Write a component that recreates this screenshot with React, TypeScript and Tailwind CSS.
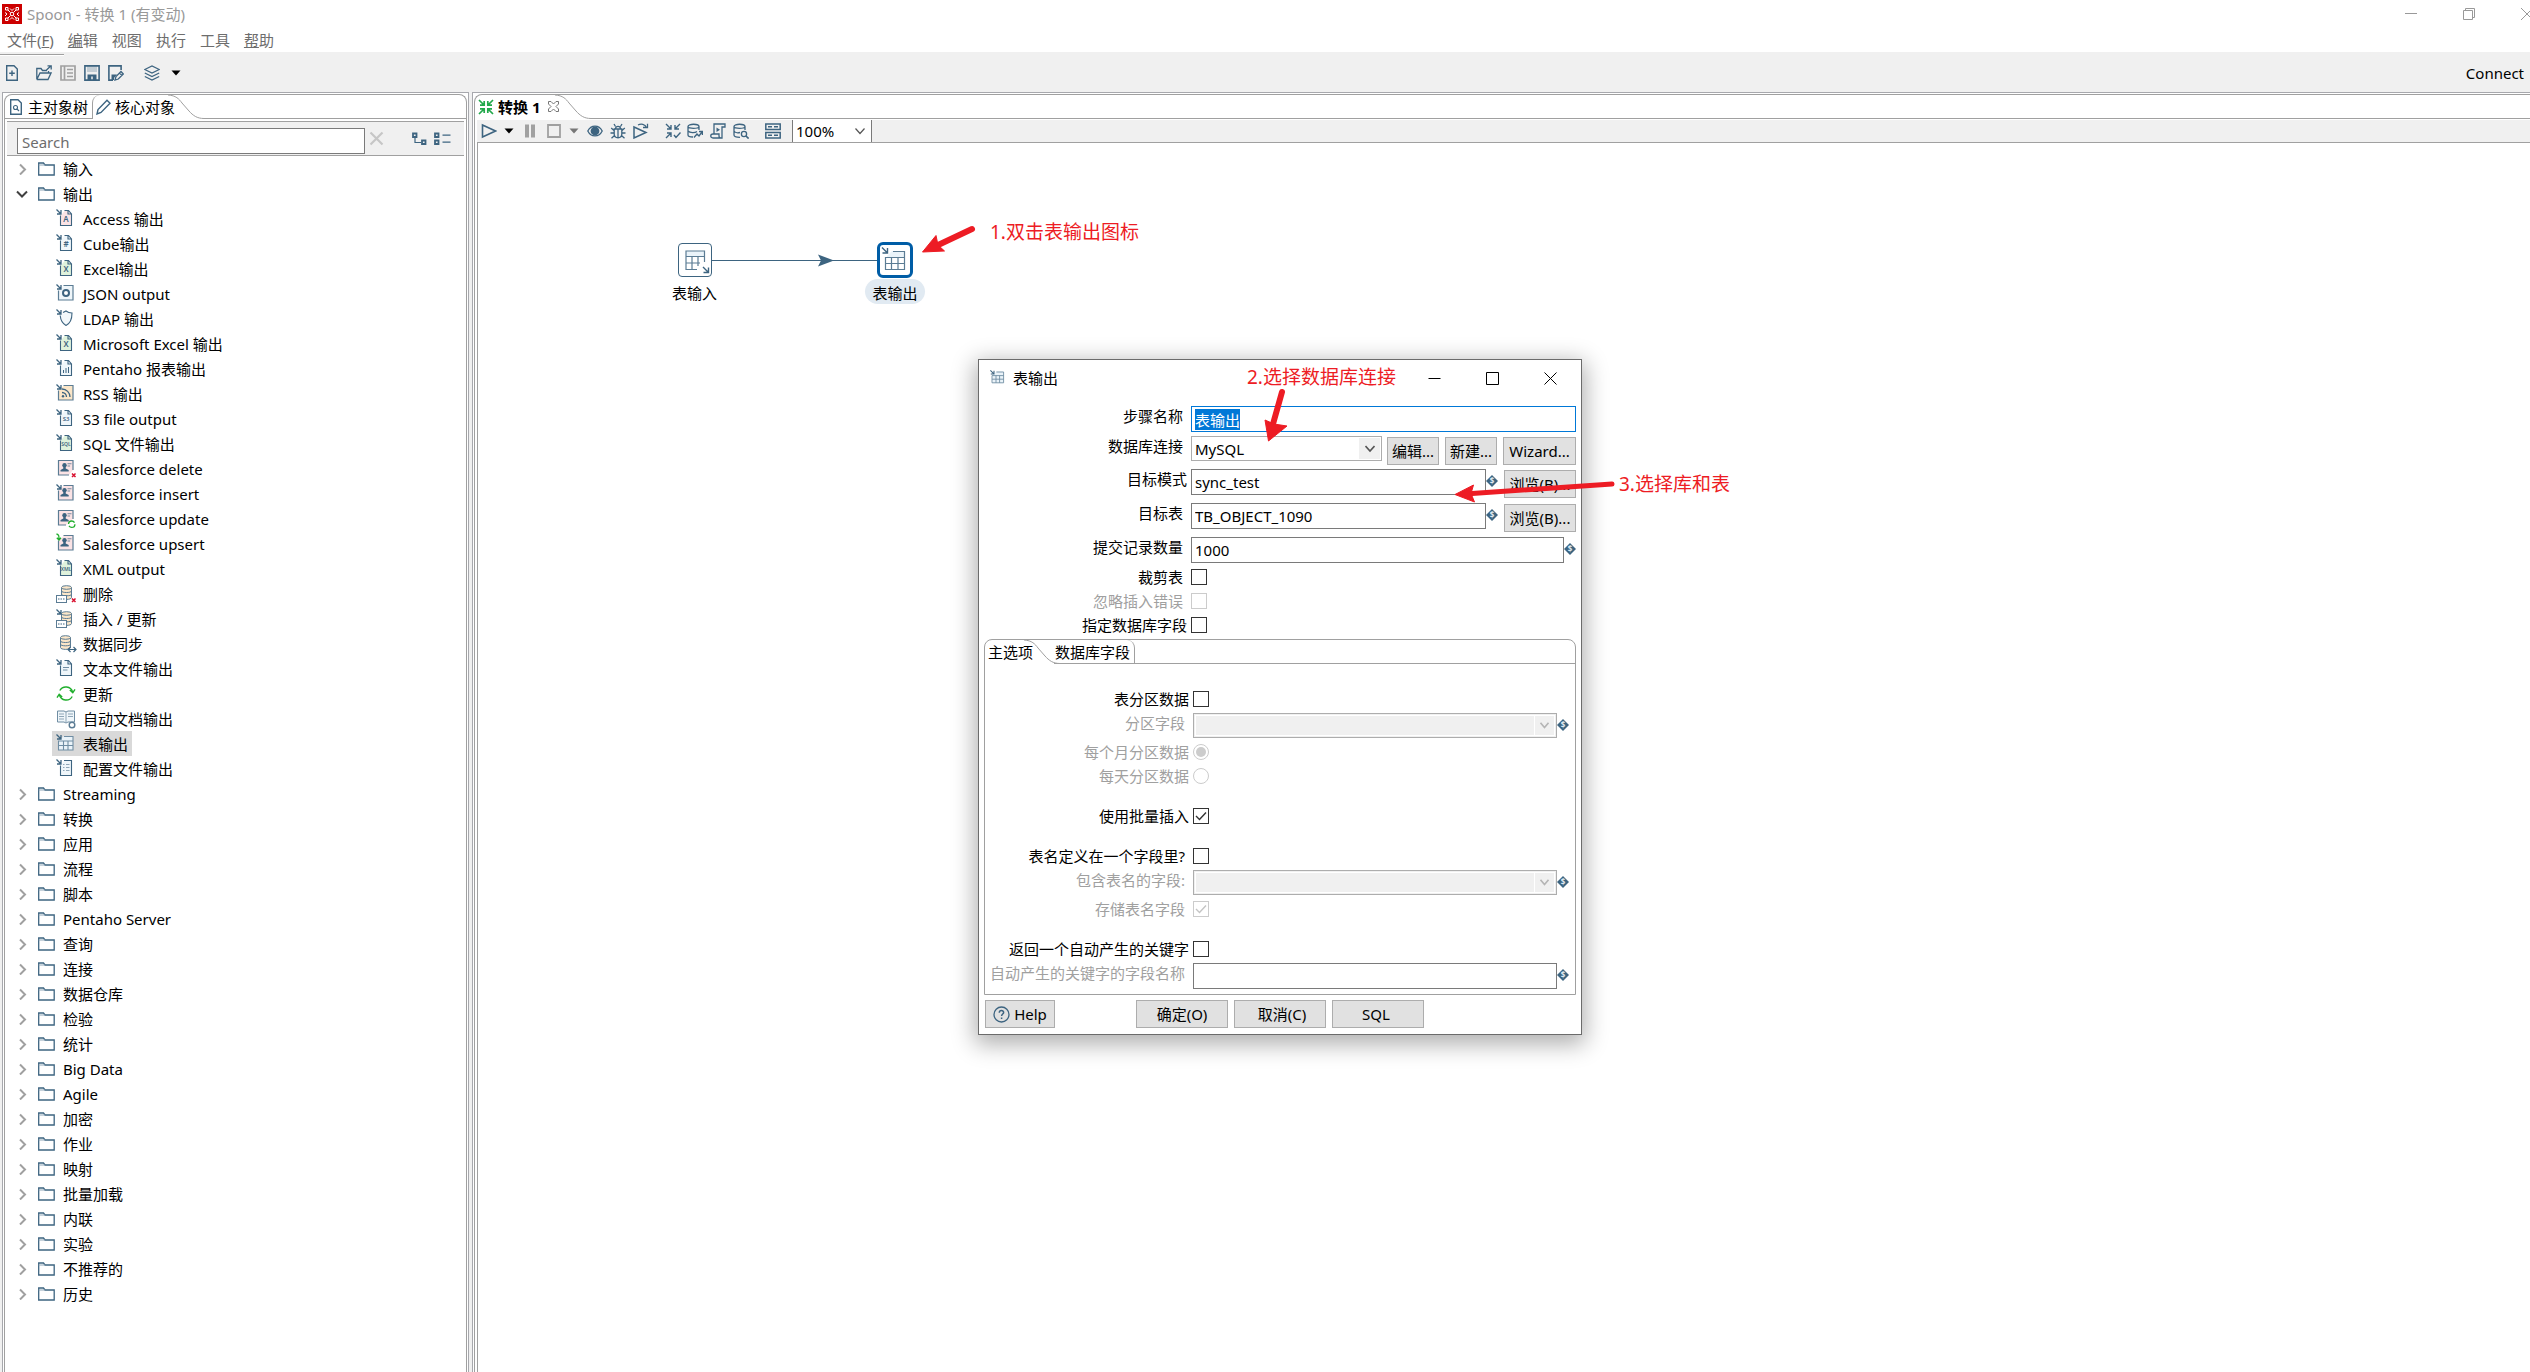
import React, { useEffect, useRef } from 'react';

const BLUE = '#3d6480';
const FONT = "font-['Noto_Sans','Noto_Sans_CJK_SC',sans-serif]";

/* ---------- step icons ---------- */

function InArrow({ color = BLUE }: { color?: string }) {
  return <path d="M0.5 0.5 L4.5 4.5 M5 1 V5 H1" fill="none" stroke={color} strokeWidth="1.3" />;
}

function FileIcon({ fill, label, size = 8, children }: { fill: string; label?: string; size?: number; children?: React.ReactNode }) {
  return (
    <g>
      <path d="M4.5 7 L8.5 2 H12.5 L15.5 5 V16.5 H4.5 Z" fill={fill} />
      <path d="M4.5 6.5 V16.5 H15.5 V5 L12.5 1.5 H8.5 M12 1.5 V5 H15.5" fill="none" stroke={BLUE} strokeWidth="1.1" />
      {label && (
        <text x="10" y={size > 6 ? 13 : 11.5} textAnchor="middle" fontSize={size} fontWeight="600" fill={BLUE} fontFamily="Noto Sans, sans-serif">
          {label}
        </text>
      )}
      {children}
      <InArrow />
    </g>
  );
}

function BoxFrame({ fill }: { fill: string }) {
  return (
    <g>
      <path d="M2.5 7 L8 1.5 H17 V16 H2.5 Z" fill={fill} />
      <path d="M2.5 6.5 V16 H17 V1.5 H7.5" fill="none" stroke="#5b7c94" strokeWidth="1.2" />
    </g>
  );
}

function Person() {
  return (
    <g fill={BLUE}>
      <circle cx="8.5" cy="6.3" r="2.2" />
      <path d="M7.3 8 h2.4 v1.6 l3 1.4 v1.6 H4.5 V11 l2.8 -1.4 Z" />
      <path d="M11.5 4.2 h4 v1 h-4 Z M11.5 6.4 h2.6 v1 h-2.6 Z" opacity="0.7" />
    </g>
  );
}

function Cylinder({ x = 5, y = 1 }: { x?: number; y?: number }) {
  return (
    <g transform={`translate(${x} ${y})`} fill="#fbe6c8" stroke="#5b7c94" strokeWidth="1">
      <path d="M0.5 2.5 V12.5 C0.5 15 10.5 15 10.5 12.5 V2.5" />
      <ellipse cx="5.5" cy="2.5" rx="5" ry="1.8" />
      <path d="M0.5 6 C0.5 8 10.5 8 10.5 6 M0.5 9.3 C0.5 11.3 10.5 11.3 10.5 9.3" fill="none" />
    </g>
  );
}

function Slip() {
  return (
    <g>
      <rect x="0.5" y="11.5" width="10" height="7" fill="#fff" stroke="#5b7c94" />
      <path d="M2 15 H9.5" stroke={BLUE} strokeDasharray="1.5 1" />
    </g>
  );
}

function RedX() {
  return <path d="M16 14.5 L19.5 18 M19.5 14.5 L16 18" stroke="#d9102f" strokeWidth="1.5" />;
}

function TableOut() {
  return (
    <g>
      <path d="M3 6.5 L8 2 H17 V16 H3 Z" fill="#eaf3f9" />
      <path d="M8 2.5 H17 V16 H2.5 V7 H17 M7.5 7 V16 M12 7 V16 M2.5 11.5 H17" fill="none" stroke="#6f8da3" strokeWidth="1.1" />
      <InArrow />
    </g>
  );
}

const stepArt: Record<string, React.ReactNode> = {
  access: <FileIcon fill="#fbe3e5" label="A" />,
  cube: <FileIcon fill="#eff6fa" label="#" />,
  excel: <FileIcon fill="#dff2dc" label="X" />,
  json: (
    <g>
      <BoxFrame fill="#eff6fa" />
      <circle cx="10" cy="9" r="3" fill="#fff" stroke={BLUE} strokeWidth="2" />
      <InArrow />
    </g>
  ),
  ldap: (
    <g>
      <path d="M4 6 L10 2 L16 4 C16 10 14 14 10 16.5 C6 14 4.5 10 4 6 Z" fill="#f3f8fb" />
      <path d="M4.2 6.5 C4.6 11 6.5 14.5 10 16.5 C14 14.5 16 10 16 4 C13.5 4 11.5 3.2 10 2 L7 3.6" fill="none" stroke={BLUE} strokeWidth="1.1" />
      <InArrow />
    </g>
  ),
  report: (
    <FileIcon fill="#eff6fa">
      <path d="M7.5 14 V11 M10 14 V9 M12.5 14 V8" stroke={BLUE} strokeWidth="1" />
    </FileIcon>
  ),
  rss: (
    <g>
      <BoxFrame fill="#fbe6c8" />
      <path d="M6 5 A8 8 0 0 1 14 13 M6 8.5 A4.5 4.5 0 0 1 10.5 13" fill="none" stroke={BLUE} strokeWidth="1.3" />
      <circle cx="7" cy="12.2" r="1.2" fill={BLUE} />
      <InArrow />
    </g>
  ),
  s3: <FileIcon fill="#eff6fa" label="S3" size={6} />,
  sql: <FileIcon fill="#dff2dc" label="SQL" size={5} />,
  sfdelete: (
    <g>
      <path d="M13 16 H2.5 V1.5 H17 V11" fill="#fbe3e5" stroke="#5b7c94" strokeWidth="1.2" />
      <Person />
      <RedX />
    </g>
  ),
  sfinsert: (
    <g>
      <BoxFrame fill="#fbe3e5" />
      <Person />
      <InArrow />
    </g>
  ),
  sfupdate: (
    <g>
      <path d="M10 16 H2.5 V1.5 H17 V10" fill="#fbe3e5" stroke="#5b7c94" strokeWidth="1.2" />
      <Person />
      <circle cx="15.7" cy="15.2" r="3.2" fill="#fff" stroke="#1fae2c" strokeWidth="1.3" strokeDasharray="8 2" />
    </g>
  ),
  sfupsert: (
    <g>
      <BoxFrame fill="#fbe3e5" />
      <Person />
      <path d="M0.5 0 C3 0.5 3 2 3 5.5 M0.8 3.8 L3 6 L5 3.8" fill="none" stroke="#1fae2c" strokeWidth="1.3" />
    </g>
  ),
  xml: <FileIcon fill="#dff2dc" label="XML" size={5} />,
  delete: (
    <g>
      <Cylinder />
      <Slip />
      <RedX />
    </g>
  ),
  upsert: (
    <g>
      <Cylinder x={5} y={2} />
      <Slip />
      <InArrow />
    </g>
  ),
  sync: (
    <g>
      <Cylinder x={4} y={1} />
      <path d="M12 15.5 H20 M14.5 13 L12 15.5 L14.5 18 M17.5 13 L20 15.5 L17.5 18" fill="none" stroke={BLUE} strokeWidth="1.2" />
    </g>
  ),
  text: (
    <FileIcon fill="#eff6fa">
      <path d="M7 8.5 H13 M7 11 H11.5" stroke="#6f8da3" strokeWidth="1" />
    </FileIcon>
  ),
  update: (
    <g fill="none" stroke="#1fae2c" strokeWidth="1.4">
      <path d="M3.8 6.5 A7 7 0 0 1 16.6 8 M16.2 12.5 A7 7 0 0 1 3.4 11" />
      <path d="M13.8 6 L16.8 8.6 L19 5.4 M6.2 13 L3.2 10.4 L1 13.6" />
    </g>
  ),
  doc: (
    <g>
      <path d="M1.5 2 H8 L10 3 L12 2 H18.5 V13 H12 L10 14 L8 13 H1.5 Z" fill="#eff6fa" stroke="#6f8da3" />
      <path d="M10 3 V14 M3 5 H8 M3 7.5 H8 M3 10 H8 M12 5 H17 M12 7.5 H17" stroke="#8fa6b7" />
      <circle cx="16" cy="16" r="2.8" fill="#fff" stroke="#5b7c94" strokeWidth="1.4" />
    </g>
  ),
  table: <TableOut />,
  props: (
    <g>
      <path d="M5 7 L8 2 H15.5 V16.5 H5 Z" fill="#eff6fa" />
      <path d="M4.5 6.5 V16.5 H15.5 V1.5 H8" fill="none" stroke={BLUE} strokeWidth="1.1" />
      <path d="M7 5.5 H8.5 M10 5.5 H13.5 M7 8.5 H8.5 M10 8.5 H13.5 M7 11.5 H8.5 M10 11.5 H13.5" stroke="#8fa6b7" />
      <InArrow />
    </g>
  ),
};

function StepIcon({ name }: { name: string }) {
  return (
    <svg className="size-5 shrink-0 overflow-visible" viewBox="0 0 20 20" aria-hidden="true">
      {stepArt[name]}
    </svg>
  );
}

/* ---------- tree ---------- */

const outputSteps: [string, string][] = [
  ['access', 'Access 输出'],
  ['cube', 'Cube输出'],
  ['excel', 'Excel输出'],
  ['json', 'JSON output'],
  ['ldap', 'LDAP 输出'],
  ['excel', 'Microsoft Excel 输出'],
  ['report', 'Pentaho 报表输出'],
  ['rss', 'RSS 输出'],
  ['s3', 'S3 file output'],
  ['sql', 'SQL 文件输出'],
  ['sfdelete', 'Salesforce delete'],
  ['sfinsert', 'Salesforce insert'],
  ['sfupdate', 'Salesforce update'],
  ['sfupsert', 'Salesforce upsert'],
  ['xml', 'XML output'],
  ['delete', '删除'],
  ['upsert', '插入 / 更新'],
  ['sync', '数据同步'],
  ['text', '文本文件输出'],
  ['update', '更新'],
  ['doc', '自动文档输出'],
  ['table', '表输出'],
  ['props', '配置文件输出'],
];

const otherFolders = [
  'Streaming', '转换', '应用', '流程', '脚本', 'Pentaho Server', '查询', '连接', '数据仓库', '检验',
  '统计', 'Big Data', 'Agile', '加密', '作业', '映射', '批量加载', '内联', '实验', '不推荐的', '历史',
];

function Folder({ label, open, children }: { label: string; open?: boolean; children?: React.ReactNode }) {
  return (
    <li>
      <button type="button" aria-expanded={!!open} className="flex h-[25px] items-center pl-[11px]">
        <svg className="h-3 w-3" viewBox="0 0 12 12" fill="none" aria-hidden="true">
          {open ? (
            <path d="M1 3.5 L6 8.5 L11 3.5" stroke="#404040" strokeWidth="2" />
          ) : (
            <path d="M4 1.5 L9 6.5 L4 11.5" stroke="#a0a0a0" strokeWidth="2" />
          )}
        </svg>
        <svg className="ml-[10px] h-4 w-[17px]" viewBox="0 0 17 16" fill="none" aria-hidden="true">
          <path d="M0.7 2 H5.5 L7 4 H16.2 V14 H0.7 Z" stroke={BLUE} strokeWidth="1.3" />
          <path d="M0.7 4 H7" stroke="#8fa6b7" />
        </svg>
        <span className="ml-2">{label}</span>
      </button>
      {children}
    </li>
  );
}

function Tree() {
  return (
    <ul className="flex-1 overflow-hidden">
      <Folder label="输入" />
      <Folder label="输出" open>
        <ul>
          {outputSteps.map(([icon, label], i) => (
            <li key={i}>
              <button
                type="button"
                className={
                  label === '表输出'
                    ? 'ml-[47px] flex h-[25px] items-center gap-[7px] bg-[#d9d9d9] px-1'
                    : 'ml-[47px] flex h-[25px] items-center gap-[7px] px-1'
                }
              >
                <StepIcon name={icon} />
                <span>{label}</span>
              </button>
            </li>
          ))}
        </ul>
      </Folder>
      {otherFolders.map((f) => (
        <Folder key={f} label={f} />
      ))}
    </ul>
  );
}

/* ---------- shared bits ---------- */

function Icon({ label, w = 16, children, className = '' }: { label: string; w?: number; children: React.ReactNode; className?: string }) {
  return (
    <button type="button" aria-label={label} className={`shrink-0 ${className}`}>
      <svg width={w} height="16" viewBox={`0 0 ${w} 16`} fill="none" stroke={BLUE} strokeWidth="1.6" aria-hidden="true" className="block">
        {children}
      </svg>
    </button>
  );
}

function Caret({ label, color, className }: { label: string; color: string; className: string }) {
  return (
    <button type="button" aria-label={label} className={`shrink-0 ${className}`}>
      <svg width="10" height="6" viewBox="0 0 10 6" className="block" aria-hidden="true">
        <path d="M0.5 0.5 H9.5 L5 5.5 Z" fill={color} />
      </svg>
    </button>
  );
}

function TabCurve() {
  return (
    <svg className="h-6 w-9 shrink-0" viewBox="0 0 36 24" fill="none" aria-hidden="true">
      <path d="M0 0 C8 0.5 11 4 14 8 L21 16 C25 20.5 29 23.5 36 23.5" stroke="#a0a0a0" />
    </svg>
  );
}

/* ---------- window chrome ---------- */

function TitleBar() {
  return (
    <header className="bg-white">
      <div className="flex h-7 items-center pl-0.5 text-[#999999]">
        <svg className="size-5" viewBox="0 0 20 20" aria-hidden="true">
          <rect width="20" height="20" fill="#cc0000" />
          <g stroke="#fff" strokeWidth="1" fill="none">
            <path d="M3.5 3.5 H6 V6 H3.5 Z M14 3.5 H16.5 V6 H14 Z M3.5 14 H6 V16.5 H3.5 Z M14 14 H16.5 V16.5 H14 Z" />
            <path d="M6 6 L8.5 8.5 M14 6 L11.5 8.5 M6 14 L8.5 11.5 M14 14 L11.5 11.5" />
            <path d="M8 4.5 L10 6.5 L12 4.5 M3 8.5 L5 10 L3 12 M17 8.5 L15 10 L17 12 M8 15.5 L10 13.5 L12 15.5" />
            <circle cx="10" cy="10" r="1.8" />
          </g>
        </svg>
        <span className="ml-[5px] flex-1">Spoon - 转换 1 (有变动)</span>
        <div className="flex h-6 items-center gap-11 overflow-hidden">
          <button type="button" aria-label="最小化">
            <svg width="14" height="14" viewBox="0 0 14 14" className="block"><path d="M1 6.5 H13" stroke="#999" /></svg>
          </button>
          <button type="button" aria-label="还原">
            <svg width="14" height="14" viewBox="0 0 14 14" fill="none" stroke="#999" className="block">
              <path d="M1.5 3.5 H10.5 V12.5 H1.5 Z M3.5 3.5 V1.5 H12.5 V10.5 H10.5" />
            </svg>
          </button>
          <button type="button" aria-label="关闭">
            <svg width="10" height="14" viewBox="0 0 10 14" fill="none" stroke="#999" className="block">
              <path d="M1 1 L13 13 M13 1 L1 13" />
            </svg>
          </button>
        </div>
      </div>
      <nav className="flex h-6 items-center gap-[14px] pl-[7px] text-[#6d6d6d]">
        <button type="button">文件(<u>F</u>)</button>
        <button type="button"><u>编</u>辑</button>
        <button type="button">视图</button>
        <button type="button">执行</button>
        <button type="button">工具</button>
        <button type="button"><u>帮</u>助</button>
      </nav>
    </header>
  );
}

function MainToolbar() {
  return (
    <div className="shrink-0 pt-0.5">
      <div className="h-0.5 w-16 border-t border-[#a0a0a0] bg-white" />
      <div className="flex h-9 items-center pr-1.5 pb-0.5 pl-1">
        <Icon label="新建">
          <path d="M2.7 0.8 H10 L13.3 4 V15.2 H2.7 Z M8 5.5 V11 M5.2 8.2 H10.8" strokeWidth="1.4" />
        </Icon>
        <Icon label="打开" className="ml-4">
          <path d="M0.8 14.5 V3.5 H5 L6.5 5.5 H11 M0.8 14.5 H12 L15 8 H4 L0.8 14.5 M12.5 8 V6 M10.5 5 L15 0.8 M11.5 0.8 H15.2 V4.5" strokeWidth="1.3" />
        </Icon>
        <Icon label="资源库浏览" className="ml-2">
          <path d="M1 1 H15 V15 H1 Z M4.5 1 V15 M7 4.5 H13 M7 8 H13 M7 11.5 H13" stroke="#a0a0a0" strokeWidth="1.7" />
        </Icon>
        <Icon label="保存" className="ml-2">
          <path d="M0.9 0.9 H15.1 V15.1 H0.9 Z" />
          <path d="M3 1 H13 V7 H3 Z M4 10 H12 V15 H4 Z" fill={BLUE} stroke="none" opacity="0.25" />
          <path d="M3.5 9.5 H12.5 V15 H9 V11.5 H7 V15 H3.5 Z" fill={BLUE} stroke="none" />
        </Icon>
        <Icon label="另存为" className="ml-2">
          <path d="M5 15.1 H0.9 V0.9 H13.1 V5" />
          <path d="M3.5 9.5 H9 L6 13 V15 H3.5 Z" fill={BLUE} stroke="none" />
          <path d="M7 15 L8 11.5 L13 6.5 L15.3 9 L10.3 14 Z M11.5 8 L14 10.5" strokeWidth="1.3" />
        </Icon>
        <Icon label="透视图" className="ml-5">
          <path d="M0.8 4.5 L8 1 L15.2 4.5 L8 8 Z M0.8 8 L8 11.5 L15.2 8 M0.8 11.5 L8 15 L15.2 11.5" strokeWidth="1.2" />
        </Icon>
        <Caret label="选择透视图" color="#000" className="ml-[11px]" />
        <button type="button" className="ml-auto">Connect</button>
      </div>
    </div>
  );
}

function SidePanel() {
  return (
    <aside className="flex w-[467px] shrink-0 flex-col border border-b-0 border-[#a7a8ad] bg-white px-px pt-px">
      <div className="flex min-h-0 flex-1 flex-col rounded-t-lg border border-b-0 border-[#a0a0a0]">
        <div role="tablist" className="flex h-6 shrink-0">
          <button type="button" role="tab" aria-selected="false" className="flex items-center border-b border-[#a0a0a0] pr-1 pl-[5px]">
            <svg width="12" height="16" viewBox="0 0 12 16" fill="none" stroke={BLUE} strokeWidth="1.4" aria-hidden="true">
              <path d="M0.7 0.8 H8 L11.3 4 V15.2 H0.7 Z" />
              <circle cx="5.5" cy="8.5" r="2" strokeWidth="1.1" />
              <path d="M7 10 L9 12" strokeWidth="1.1" />
            </svg>
            <span className="ml-1.5 leading-5">主对象树</span>
          </button>
          <button type="button" role="tab" aria-selected="true" className="flex w-[76px] items-center overflow-visible rounded-tl-lg border-l border-[#a0a0a0] pl-[3px] whitespace-nowrap">
            <svg width="15" height="16" viewBox="0 0 15 16" fill="none" stroke={BLUE} strokeWidth="1.4" className="shrink-0" aria-hidden="true">
              <path d="M1 15 L2 10.5 L11 1.2 L14 4.2 L5 13.5 Z" />
            </svg>
            <span className="ml-1 leading-5">核心对象</span>
          </button>
          <TabCurve />
          <div className="flex-1 border-b border-[#a0a0a0]" />
        </div>
        <div className="mx-0.5 mt-0.5 flex h-[35px] shrink-0 items-start border-y border-[#a0a0a0] bg-[#f0f0f0] pt-1.5 pl-2.5">
          <input
            aria-label="Search"
            placeholder="Search"
            className="h-[26px] w-[348px] border border-[#7a7a7a] bg-white px-1 pt-0.5 outline-none placeholder:text-[#6d6d6d]"
          />
          <button type="button" aria-label="清除" className="mt-[3px] ml-1">
            <svg width="15" height="15" viewBox="0 0 15 15" fill="none" stroke="#c6c6c6" strokeWidth="2.2" className="block">
              <path d="M1.5 1.5 L13.5 13.5 M13.5 1.5 L1.5 13.5" />
            </svg>
          </button>
          <button type="button" aria-label="全部展开" className="mt-1 ml-7">
            <svg width="15" height="14" viewBox="0 0 15 14" fill="none" stroke={BLUE} strokeWidth="1.8" className="block">
              <path d="M1 1.5 H4.5 V5 H1 Z M10 8.5 H13.5 V12 H10 Z" />
              <path d="M3 6 V10.5 H9" strokeWidth="1.2" />
            </svg>
          </button>
          <button type="button" aria-label="全部收起" className="mt-1 ml-[7px]">
            <svg width="17" height="14" viewBox="0 0 17 14" fill="none" stroke={BLUE} strokeWidth="1.8" className="block">
              <path d="M1 1.5 H4.5 V5 H1 Z M1 8.5 H4.5 V12 H1 Z" />
              <path d="M8.5 3.2 H16.5 M8.5 10.2 H16.5" strokeWidth="1.3" />
            </svg>
          </button>
        </div>
        <Tree />
      </div>
    </aside>
  );
}

function CanvasToolbar() {
  return (
    <div className="ml-0.5 flex h-[23px] shrink-0 items-center border-b border-[#a0a0a0] bg-[#f0f0f0] pl-1">
      <Icon label="运行"><path d="M1.5 2 L14.5 8 L1.5 14 Z" /></Icon>
      <Caret label="运行选项" color="#000" className="ml-[7px]" />
      <Icon label="暂停" w={10} className="ml-[11px]">
        <path d="M0 1.5 H4 V14.5 H0 Z M6 1.5 H10 V14.5 H6 Z" fill="#a0a0a0" stroke="none" />
      </Icon>
      <Icon label="停止" className="ml-[11px]"><path d="M2 2 H14 V14 H2 Z" stroke="#a0a0a0" strokeWidth="1.8" /></Icon>
      <Caret label="停止选项" color="#777" className="ml-[7px]" />
      <Icon label="预览" className="ml-2">
        <path d="M0.8 8 C4 1.5 12 1.5 15.2 8 C12 14.5 4 14.5 0.8 8 Z" strokeWidth="1.3" />
        <circle cx="8" cy="8" r="4.4" fill={BLUE} stroke="none" />
      </Icon>
      <Icon label="调试" className="ml-[7px]">
        <path d="M4.2 6 H11.8 V11 C11.8 16 4.2 16 4.2 11 Z M5.5 6 C5.5 2.5 10.5 2.5 10.5 6 M5.5 3.5 L4 1 M10.5 3.5 L12 1 M4 7.5 L1.2 5 M12 7.5 L14.8 5 M4 10 H0.5 M12 10 H15.5 M4.5 12.5 L1.5 15.2 M11.5 12.5 L14.5 15.2 M8 6 V14.5" strokeWidth="1.3" />
      </Icon>
      <Icon label="重放" className="ml-[7px]">
        <path d="M1 4 L13 9.5 L1 15 Z" strokeWidth="1.5" />
        <path d="M5 2 C8 0.5 12 1 13.5 4.5 M10 4.5 H14.5 V0.8" strokeWidth="1.3" />
      </Icon>
      <Icon label="校验" className="ml-4">
        <path d="M1 1 L6 6 M6 2 V6 H2 M15 1 L10 6 M10 2 V6 H14 M1 15 L6 10 M2 10 H6 V14 M9 12 L11 14.5 L15.5 9.5" strokeWidth="1.4" />
      </Icon>
      <Icon label="影响分析" className="ml-1.5">
        <path d="M1 3.5 V12 C1 13.5 4 14 6 14 M1 3.5 C1 0.5 12 0.5 12 3.5 C12 6 1 6 1 3.5 M12 3.5 V7 M1 8 C3 10 8 10 10 8.5 M7 14.5 L10 11 L12 13 L15.3 8.5 M12 8.5 H15.4 V12" strokeWidth="1.3" />
      </Icon>
      <Icon label="SQL" className="ml-[7px]">
        <path d="M4 11 V1 H15 V4 H12 V15 H3 C0 15 0 11 3 11 H9 V13 C9 14 10 15 11 15" strokeWidth="1.3" />
        <path d="M6.5 4.5 L10 6.8 L6.5 9 Z" fill={BLUE} stroke="none" />
      </Icon>
      <Icon label="浏览数据库" className="ml-[7px]">
        <path d="M1 3.5 V12 C1 13.5 4 14.3 7 14.3 M1 3.5 C1 0.5 12 0.5 12 3.5 C12 6 1 6 1 3.5 M12 3.5 V7 M1 8 C2 9.5 5 10 7 9.5" strokeWidth="1.3" />
        <circle cx="11" cy="11" r="2.6" strokeWidth="1.3" />
        <path d="M13 13 L15.6 15.6" />
      </Icon>
      <Icon label="结果面板" className="ml-4">
        <path d="M0.8 1 H15.2 V6.5 H0.8 Z M0.8 9.5 H15.2 V15 H0.8 Z" strokeWidth="1.5" />
        <path d="M3 3.7 H7 M9 3.7 H13 M3 12.2 H7 M9 12.2 H13" />
      </Icon>
      <div className="relative ml-[11px] h-[22px] w-20 border-x border-[#7a7a7a] bg-white">
        <select aria-label="缩放" className="h-full w-full appearance-none bg-white pl-[3px] leading-5 outline-none">
          <option>100%</option>
        </select>
        <svg className="pointer-events-none absolute top-2 right-1.5" width="10" height="7" viewBox="0 0 10 7" fill="none" aria-hidden="true">
          <path d="M0.5 0.5 L5 5.5 L9.5 0.5" stroke="#555" strokeWidth="1.2" />
        </svg>
      </div>
    </div>
  );
}

/* ---------- dialog ---------- */

function VarIcon() {
  return (
    <svg className="size-3 shrink-0" viewBox="0 0 12 12" aria-hidden="true">
      <path d="M6 0 L12 6 L6 12 L0 6 Z" fill={BLUE} />
      <text x="6" y="9" textAnchor="middle" fontSize="8" fontWeight="700" fill="#dfe9f0" fontFamily="Noto Sans, sans-serif">$</text>
    </svg>
  );
}

function Label({ id, dim, near, small, children }: { id: string; dim?: boolean; near?: boolean; small?: boolean; children: React.ReactNode }) {
  return (
    <label
      htmlFor={id}
      className={[
        'w-[207px] shrink-0 text-right whitespace-nowrap',
        small ? 'leading-4' : 'leading-5',
        near ? 'pr-1' : 'pr-2',
        dim ? 'text-[#a0a0a0]' : '',
      ].join(' ')}
    >
      {children}
    </label>
  );
}

function Check({ id, checked, disabled }: { id: string; checked?: boolean; disabled?: boolean }) {
  return (
    <span className="relative size-4 shrink-0">
      <input
        id={id}
        type="checkbox"
        defaultChecked={checked}
        disabled={disabled}
        className="block size-4 appearance-none border border-[#333333] bg-white disabled:border-[#cccccc]"
      />
      {checked && (
        <svg className="pointer-events-none absolute inset-0" viewBox="0 0 16 16" fill="none" aria-hidden="true">
          <path d="M3 8 L6.5 11.5 L13 4.5" stroke={disabled ? '#c4c4c4' : '#333'} strokeWidth="1.4" />
        </svg>
      )}
    </span>
  );
}

const BTN = 'h-7 border border-[#adadad] bg-[#e1e1e1] text-center leading-6 whitespace-nowrap';
const FIELD = 'h-[26px] min-w-0 flex-1 border border-[#7a7a7a] bg-white px-[3px] outline-none';

function DisabledSelect({ id }: { id: string }) {
  return (
    <div className="relative h-[25px] flex-1 border border-[#adadad] bg-[#f0f0f0] p-px">
      <select id={id} disabled className="h-full w-full appearance-none border border-white bg-[#f0f0f0]" />
      <div className="pointer-events-none absolute top-0.5 right-0.5 flex h-[19px] w-5 items-center justify-center border-l border-white">
        <svg width="9" height="7" viewBox="0 0 9 7" fill="none"><path d="M0.5 0.8 L4.5 5.5 L8.5 0.8" stroke="#b5b5b5" strokeWidth="1.6" /></svg>
      </div>
    </div>
  );
}

function Dialog() {
  const nameRef = useRef<HTMLInputElement>(null);
  useEffect(() => {
    nameRef.current?.focus();
    nameRef.current?.select();
  }, []);
  return (
    <section role="dialog" aria-label="表输出" className="absolute top-[216px] left-[500px] w-[604px] border border-[#6b6b6b] bg-white px-[5px] pb-1.5 shadow-[0_6px_22px_3px_rgba(0,0,0,0.32)]">
      <div className="flex h-9 items-center pl-1.5">
        <svg className="size-4" viewBox="0 0 20 20" aria-hidden="true"><TableOut /></svg>
        <span className="ml-[7px] flex-1">表输出</span>
        <div className="flex gap-[45px] pr-[19px]">
          <button type="button" aria-label="最小化">
            <svg width="13" height="13" viewBox="0 0 13 13" className="block"><path d="M0.5 6.5 H12.5" stroke="#000" /></svg>
          </button>
          <button type="button" aria-label="最大化">
            <svg width="13" height="13" viewBox="0 0 13 13" fill="none" className="block"><path d="M0.5 0.5 H12.5 V12.5 H0.5 Z" stroke="#000" /></svg>
          </button>
          <button type="button" aria-label="关闭">
            <svg width="13" height="13" viewBox="0 0 13 13" className="block"><path d="M0.5 0.5 L12.5 12.5 M12.5 0.5 L0.5 12.5" stroke="#000" /></svg>
          </button>
        </div>
      </div>

      <div className="pt-2.5">
        <div className="flex h-[30px] items-start">
          <Label id="step">步骤名称</Label>
          <input
            id="step"
            ref={nameRef}
            defaultValue="表输出"
            className="h-[26px] min-w-0 flex-1 border border-[#0078d7] bg-white px-[3px] outline-none selection:bg-[#0078d7] selection:text-white"
          />
        </div>
        <div className="flex h-[33px] items-start">
          <Label id="conn">数据库连接</Label>
          <div className="relative h-[25px] w-[191px] border border-[#adadad] bg-white">
            <select id="conn" className="h-full w-full appearance-none pl-[3px] leading-[22px] outline-none">
              <option>MySQL</option>
            </select>
            <div className="pointer-events-none absolute top-px right-px flex h-[21px] w-[21px] items-center justify-center bg-[#f0f0f0]">
              <svg width="10" height="8" viewBox="0 0 10 8" fill="none"><path d="M0.5 1 L5 6 L9.5 1" stroke="#555" strokeWidth="1.6" /></svg>
            </div>
          </div>
          <div className="mt-px ml-[5px] flex flex-1 gap-1.5">
            <button type="button" className={`w-[52px] ${BTN}`}>编辑...</button>
            <button type="button" className={`w-[52px] ${BTN}`}>新建...</button>
            <button type="button" className={`flex-1 ${BTN}`}>Wizard...</button>
          </div>
        </div>
        <div className="flex h-[34px] items-start">
          <Label id="schema" near>目标模式</Label>
          <input id="schema" defaultValue="sync_test" className={FIELD} />
          <span className="pt-1.5 pr-1.5"><VarIcon /></span>
          <button type="button" className={`mt-px w-[72px] ${BTN}`}>浏览(B)...</button>
        </div>
        <div className="flex h-[34px] items-start">
          <Label id="target">目标表</Label>
          <input id="target" defaultValue="TB_OBJECT_1090" className={FIELD} />
          <span className="pt-1.5 pr-1.5"><VarIcon /></span>
          <button type="button" className={`mt-px w-[72px] ${BTN}`}>浏览(B)...</button>
        </div>
        <div className="flex h-8 items-start">
          <Label id="commit">提交记录数量</Label>
          <input id="commit" defaultValue="1000" className={FIELD} />
          <span className="pt-1.5"><VarIcon /></span>
        </div>
        <div className="flex h-6 items-start">
          <Label id="truncate" small>裁剪表</Label>
          <Check id="truncate" />
        </div>
        <div className="flex h-6 items-start">
          <Label id="ignore" small dim>忽略插入错误</Label>
          <Check id="ignore" disabled />
        </div>
        <div className="flex h-[22px] items-start">
          <Label id="fields" small near>指定数据库字段</Label>
          <Check id="fields" />
        </div>
      </div>

      <div className="rounded-t-lg border border-[#a0a0a0]">
        <div role="tablist" className="flex h-6">
          <button type="button" role="tab" aria-selected="true" className="w-[39px] pl-[3px] text-left whitespace-nowrap">主选项</button>
          <TabCurve />
          <button type="button" role="tab" aria-selected="false" className="-ml-1.5 rounded-tr-lg border-r border-b border-[#a0a0a0] pr-1 pl-px">数据库字段</button>
          <div className="flex-1 border-b border-[#a0a0a0]" />
        </div>
        <div className="flex flex-col pt-[27px] pr-1.5 pb-[5px] pl-px">
          <div className="flex h-[22px] items-start">
            <Label id="part" small near>表分区数据</Label>
            <Check id="part" />
          </div>
          <div className="flex h-[31px] items-start">
            <Label id="partField" dim>分区字段</Label>
            <DisabledSelect id="partField" />
            <span className="pt-1.5"><VarIcon /></span>
          </div>
          <div className="flex h-6 items-start">
            <Label id="monthly" small near dim>每个月分区数据</Label>
            <span className="relative size-4 shrink-0">
              <input id="monthly" name="period" type="radio" defaultChecked disabled className="block size-4 appearance-none rounded-full border border-[#cccccc] bg-white" />
              <span className="pointer-events-none absolute inset-[3px] rounded-full bg-[#cccccc]" />
            </span>
          </div>
          <div className="flex h-10 items-start">
            <Label id="daily" small near dim>每天分区数据</Label>
            <input id="daily" name="period" type="radio" disabled className="block size-4 appearance-none rounded-full border border-[#cccccc] bg-white" />
          </div>
          <div className="flex h-10 items-start">
            <Label id="batch" small near>使用批量插入</Label>
            <Check id="batch" checked />
          </div>
          <div className="flex h-[22px] items-start">
            <Label id="nameIn" small>表名定义在一个字段里?</Label>
            <Check id="nameIn" />
          </div>
          <div className="flex h-[31px] items-start">
            <Label id="nameField" dim>包含表名的字段:</Label>
            <DisabledSelect id="nameField" />
            <span className="pt-1.5"><VarIcon /></span>
          </div>
          <div className="flex h-10 items-start">
            <Label id="store" small dim>存储表名字段</Label>
            <Check id="store" checked disabled />
          </div>
          <div className="flex h-[22px] items-start">
            <Label id="ret" small near>返回一个自动产生的关键字</Label>
            <Check id="ret" />
          </div>
          <div className="flex items-start">
            <Label id="keyField" dim>自动产生的关键字的字段名称</Label>
            <input id="keyField" className={FIELD} />
            <span className="pt-1.5"><VarIcon /></span>
          </div>
        </div>
      </div>

      <div className="mt-[5px] flex gap-1.5 pl-px">
        <button type="button" className={`mr-[75px] flex w-[70px] items-center justify-center gap-1 ${BTN}`}>
          <svg width="17" height="17" viewBox="0 0 17 17" fill="none" stroke={BLUE} strokeWidth="1.3" aria-hidden="true">
            <circle cx="8.5" cy="8.5" r="7.5" />
            <path d="M6.3 6.8 C6.3 3.8 10.8 4 10.6 6.6 C10.5 8 8.6 8.2 8.6 10 M8.6 11.4 V13" strokeWidth="1.5" />
          </svg>
          Help
        </button>
        <button type="button" className={`w-[92px] ${BTN}`}>确定(O)</button>
        <button type="button" className={`w-[92px] pl-1 ${BTN}`}>取消(C)</button>
        <button type="button" className={`w-[92px] pr-1 ${BTN}`}>SQL</button>
      </div>
    </section>
  );
}

/* ---------- canvas ---------- */

function Canvas() {
  return (
    <div className="relative ml-0.5 min-h-0 flex-1 overflow-hidden border-l border-[#a0a0a0] bg-white">
      <svg className="absolute top-[110px] left-[234px]" width="165" height="14" viewBox="0 0 165 14" aria-hidden="true">
        <path d="M0 7.5 H165" stroke={BLUE} strokeWidth="1.2" />
        <path d="M106 1.5 L122 7.5 L106 13.5 L109 7.5 Z" fill={BLUE} />
      </svg>
      <button type="button" aria-label="表输入" className="absolute top-[100px] left-[200px] size-[34px] rounded border border-[#3d6480] bg-white">
        <svg width="32" height="32" viewBox="0 0 32 32" fill="none" className="block" aria-hidden="true">
          <path d="M7 7 H25 V12 H7 Z" fill="#eaf3f9" />
          <path d="M18 25.5 H7 V7 H25.5 V18 M7 12.5 H25.5 M13 12.5 V25 M19 12.5 V22 M7 19 H21" stroke="#5b7c94" strokeWidth="1.2" />
          <path d="M24 23 L29 28 M29.5 23.5 V28.5 H24.5" stroke={BLUE} strokeWidth="1.4" />
        </svg>
      </button>
      <div className="absolute top-[139px] left-[194px]">表输入</div>

      <button type="button" aria-label="表输出" className="absolute top-[99px] left-[399px] size-9 rounded-md border-3 border-[#005da6] bg-white">
        <svg width="30" height="30" viewBox="0 0 30 30" fill="none" className="block" aria-hidden="true">
          <path d="M7 11 L12 6 H24 V12 H7 Z" fill="#eaf3f9" />
          <path d="M13 6.5 H24.5 V24.5 H5.5 V12.5 H24.5 M11.5 12.5 V24 M18 12.5 V24 M5.5 18.5 H24.5" stroke="#5b7c94" strokeWidth="1.2" />
          <path d="M2 2.5 L7 7.5 M7.5 3 V8 H2.5" stroke={BLUE} strokeWidth="1.4" />
        </svg>
      </button>
      <div className="absolute top-[136px] left-[387px] h-[25px] w-15 rounded-full bg-[#e1eaf2] text-center leading-7">表输出</div>

      <Dialog />

      <svg className="pointer-events-none absolute top-0 left-0" width="1200" height="400" viewBox="478 143 1200 400" aria-hidden="true">
        <g fill="#ed1c24" stroke="#ed1c24">
          <path d="M972 229 L936 246" strokeWidth="6" strokeLinecap="round" />
          <path d="M922.5 252 L936 235.5 L938 245 L944.5 251 Z" strokeWidth="1" />
          <path d="M1282 392 L1273 424" strokeWidth="6" strokeLinecap="round" />
          <path d="M1268.5 441 L1265 420 L1274 424 L1287 426 Z" strokeWidth="1" />
          <path d="M1612 484 L1472 493.5" strokeWidth="5" strokeLinecap="round" />
          <path d="M1455 494.5 L1473.5 485 L1471 493.5 L1474.5 502 Z" strokeWidth="1" />
        </g>
      </svg>
      <div className="absolute top-[76px] left-[512px] text-[19px] leading-[26px] text-[#ed1c24]">1.双击表输出图标</div>
      <div className="absolute top-[221px] left-[769px] text-[19px] leading-[26px] text-[#ed1c24]">2.选择数据库连接</div>
      <div className="absolute top-[328px] left-[1141px] text-[19px] leading-[26px] text-[#ed1c24]">3.选择库和表</div>
    </div>
  );
}

function Workspace() {
  return (
    <main className="flex min-w-0 flex-1 flex-col border-t border-l border-[#a7a8ad] bg-white pt-px pl-px">
      <div className="flex min-h-0 flex-1 flex-col rounded-tl-lg border-t border-l border-[#a0a0a0]">
        <div role="tablist" className="flex h-6 shrink-0">
          <button type="button" role="tab" aria-selected="true" className="flex w-20 items-center pb-px pl-[3px] whitespace-nowrap">
            <svg width="16" height="16" viewBox="0 0 16 16" fill="none" stroke="#22a84b" strokeWidth="1.7" className="shrink-0" aria-hidden="true">
              <path d="M1 1 L6 6 M6.2 2 V6.2 H2 M15 1 L10 6 M9.8 2 V6.2 H14 M1 15 L6 10 M2 9.8 H6.2 V14 M15 15 L10 10 M14 9.8 H9.8 V14" />
            </svg>
            <b className="ml-1">转换 1</b>
            <svg width="11" height="11" viewBox="0 0 11 11" fill="none" stroke="#777" className="ml-2 shrink-0" aria-hidden="true">
              <path d="M0.5 0.5 H3 L5.5 3 L8 0.5 H10.5 V3 L8 5.5 L10.5 8 V10.5 H8 L5.5 8 L3 10.5 H0.5 V8 L3 5.5 L0.5 3 Z" />
            </svg>
          </button>
          <TabCurve />
          <div className="flex-1 border-b border-[#a0a0a0]" />
        </div>
        <div className="h-px shrink-0" />
        <CanvasToolbar />
        <Canvas />
      </div>
    </main>
  );
}

export default function App() {
  return (
    <div className={`flex h-screen flex-col overflow-hidden bg-[#f0f0f0] text-[15px] leading-[22px] text-black ${FONT}`}>
      <TitleBar />
      <MainToolbar />
      <div className="flex min-h-0 flex-1 gap-[3px] pl-0.5">
        <SidePanel />
        <Workspace />
      </div>
    </div>
  );
}
